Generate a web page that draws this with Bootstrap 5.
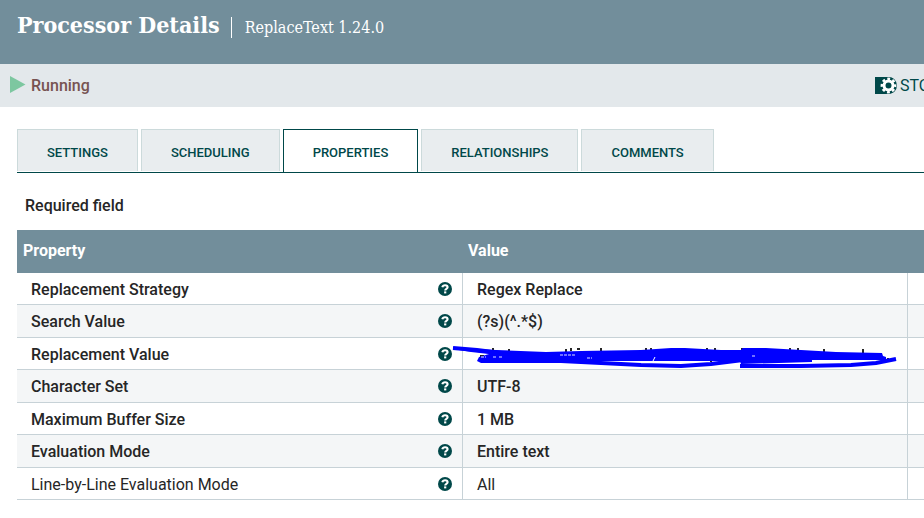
<!DOCTYPE html>
<html lang="en">
<head>
<meta charset="utf-8">
<meta name="viewport" content="width=device-width, initial-scale=1">
<title>Processor Details</title>
<link href="https://cdn.jsdelivr.net/npm/bootstrap@5.3.0/dist/css/bootstrap.min.css" rel="stylesheet">
<style>
  body { font-family: Roboto, "Liberation Sans", sans-serif; font-size: 16px; line-height: 24px; color: #262626; }
  .dialog-header { background: #728e9b; height: 64px; padding: 7px 17px 0; gap: 11px; font-family: "Roboto Slab", "DejaVu Serif Condensed", "DejaVu Serif", serif; }
  .dialog-title { font-size: 23px; line-height: 36px; }
  .dialog-type { font-size: 16px; line-height: 21px; border-left: 1px solid #fff; padding-left: 13px; margin-top: 10px; }
  .status-bar { background: #e3e8eb; height: 43px; padding-left: 10px; }
  .run-state { color: #775351; font-weight: 500; gap: 5px; }
  .run-state svg { margin-bottom: 2px; }
  .stop-btn { color: #004849; gap: 3px; width: 49px; line-height: 24px; }
  .dialog-body { padding: 22px 0 0 17px; }
  .tab-strip { border-bottom: 1px solid #004849; gap: 3px; }
  .tab-strip .nav-link { height: 42px; margin: 0 0 1px; padding: 4px 29px 0; border: 1px solid #ccdadb; border-bottom: 0; border-radius: 0; background: #e9edef; color: #004849; font-size: 13px; font-weight: 500; }
  .tab-strip .nav-link.active { height: 43px; margin-bottom: 0; background: #fff; color: #004849; border-color: #004849; }
  .required-note { padding: 21px 8px 12px; font-weight: 500; }
  .prop-table { table-layout: fixed; border-collapse: separate; border-spacing: 0; }
  .prop-table th, .prop-table td { padding: 0; vertical-align: middle; font-weight: 500; }
  .prop-table thead th { background: #728e9b; color: #fff; height: 43px; padding: 0 0 2px 6px; font-weight: 700; }
  .prop-table col.actions { width: 17px; }
  .prop-table tbody th, .prop-table tbody td { height: 32px; padding-top: 2px; border-bottom: 1px solid #c7d2d7; }
  .prop-table tbody tr:nth-child(even) > * { height: 33px; background: #f4f6f7; }
  .prop-table tbody th { padding-left: 14px; padding-right: 10px; }
  .prop-table tbody th svg { margin-bottom: 2px; }
  .prop-table tbody td { border-left: 1px solid #c7d2d7; padding-left: 14px; }
  .prop-table tbody tr.optional > * { font-weight: 400; }
  .redaction { left: -12px; top: 3px; }
</style>
<script src="https://cdn.jsdelivr.net/npm/bootstrap@5.3.0/dist/js/bootstrap.bundle.min.js"></script>
</head>
<body class="overflow-hidden">
<svg class="d-none" aria-hidden="true">
  <symbol id="help" viewBox="0 0 14 14">
    <circle cx="7" cy="7" r="7" fill="#004849"/>
    <path d="M4.300 5.200C4.700 3.800 5.700 3.200 7.100 3.200c1.500 0 2.500.8 2.500 2 0 1.700-2.400 1.500-2.400 3.200" fill="none" stroke="#fff" stroke-width="2.100"/>
    <path d="M6.100 9.400h2.200v2H6.100z" fill="#fff"/>
  </symbol>
</svg>

<header class="dialog-header d-flex align-items-start text-white">
  <h1 class="dialog-title fw-bold mb-0 text-nowrap">Processor Details</h1>
  <div class="dialog-type text-nowrap">ReplaceText 1.24.0</div>
</header>

<section class="status-bar d-flex justify-content-between align-items-center">
  <div class="run-state d-flex align-items-center">
    <svg width="16" height="18" viewBox="0 0 16 18" aria-hidden="true"><path d="M0 0v17l15.500-8.500z" fill="#7dc7a0"/></svg>
    <span>Running</span>
  </div>
  <button type="button" class="stop-btn btn p-0 border-0 rounded-0 d-flex align-items-center overflow-hidden">
    <svg class="flex-shrink-0" width="22" height="19" viewBox="0 0 22 19" aria-hidden="true">
      <path d="M0 1h14l5 2v13l-5 2H0z" fill="#004849"/>
      <circle cx="13.500" cy="9.500" r="8.500" fill="#004849"/>
      <circle cx="13.500" cy="9.500" r="6.600" fill="none" stroke="#fff" stroke-width="2.600" stroke-dasharray="2.800 2.384" stroke-dashoffset="1.400"/>
      <circle cx="13.500" cy="9.500" r="4.500" fill="none" stroke="#fff" stroke-width="3"/>
    </svg>
    <span>STO</span>
  </button>
</section>

<main class="dialog-body">
  <div class="tab-strip nav flex-nowrap" role="tablist">
    <button type="button" class="nav-link" role="tab">SETTINGS</button>
    <button type="button" class="nav-link" role="tab">SCHEDULING</button>
    <button type="button" class="nav-link active" role="tab" aria-selected="true">PROPERTIES</button>
    <button type="button" class="nav-link" role="tab">RELATIONSHIPS</button>
    <button type="button" class="nav-link" role="tab">COMMENTS</button>
  </div>

  <div class="required-note">Required field</div>

  <table class="prop-table w-100">
    <colgroup><col><col><col class="actions"></colgroup>
    <thead>
      <tr><th scope="col">Property</th><th scope="col">Value</th><th></th></tr>
    </thead>
    <tbody>
      <tr><th scope="row"><div class="d-flex justify-content-between align-items-center">Replacement Strategy<svg width="14" height="14"><use href="#help"/></svg></div></th><td>Regex Replace</td><td></td></tr>
      <tr><th scope="row"><div class="d-flex justify-content-between align-items-center">Search Value<svg width="14" height="14"><use href="#help"/></svg></div></th><td>(?s)(^.*$)</td><td></td></tr>
      <tr><th scope="row"><div class="d-flex justify-content-between align-items-center">Replacement Value<svg width="14" height="14"><use href="#help"/></svg></div></th>
        <td class="position-relative">
          <svg class="redaction position-absolute" width="450" height="28" viewBox="450 341 450 28" aria-hidden="true">
            <path d="M492 348v4M508 349v3M565 349v3M570 348v3M576 349h3M600 348v4M645 348v3M650 348v3M706 348v4M714 348v4M741 348v3M789 348v4M797 348v4M823 349v3M862 349v4M479 356h4M887 358v3M710 360v2" stroke="#262626" stroke-width="2"/>
            <path d="M452 347L475 349L495 350L545 352L580 351L640 350L670 348L684 348L720 350L740 350L742 348L765 348L800 350L835 352L881 353L882 356L885 357V360H811V362L740 364L739 361L600 361L580 363H520L480 363L476 361L478 357L488 354L470 352L452 349Z" fill="#00f"/>
            <path d="M560 361L600 363L640 365L680 366L710 364L742 360" fill="none" stroke="#00f" stroke-width="4"/>
            <path d="M739 366H800L850 365L875 363L895 359" fill="none" stroke="#00f" stroke-width="4"/>
            <path d="M452 348L476 350L500 353" fill="none" stroke="#00f" stroke-width="4"/>
            <path d="M480 357h5M492 357h3M498 357h4M559 355h16M586 358h5M751 356h4" stroke="#dfe0ff" stroke-width="1" stroke-dasharray="3 1"/>
            <path d="M652 361l2-4" stroke="#fff" stroke-width="1"/>
          </svg>
        </td><td></td></tr>
      <tr><th scope="row"><div class="d-flex justify-content-between align-items-center">Character Set<svg width="14" height="14"><use href="#help"/></svg></div></th><td>UTF-8</td><td></td></tr>
      <tr><th scope="row"><div class="d-flex justify-content-between align-items-center">Maximum Buffer Size<svg width="14" height="14"><use href="#help"/></svg></div></th><td>1 MB</td><td></td></tr>
      <tr><th scope="row"><div class="d-flex justify-content-between align-items-center">Evaluation Mode<svg width="14" height="14"><use href="#help"/></svg></div></th><td>Entire text</td><td></td></tr>
      <tr class="optional"><th scope="row"><div class="d-flex justify-content-between align-items-center">Line-by-Line Evaluation Mode<svg width="14" height="14"><use href="#help"/></svg></div></th><td>All</td><td></td></tr>
    </tbody>
  </table>
</main>
</body>
</html>
